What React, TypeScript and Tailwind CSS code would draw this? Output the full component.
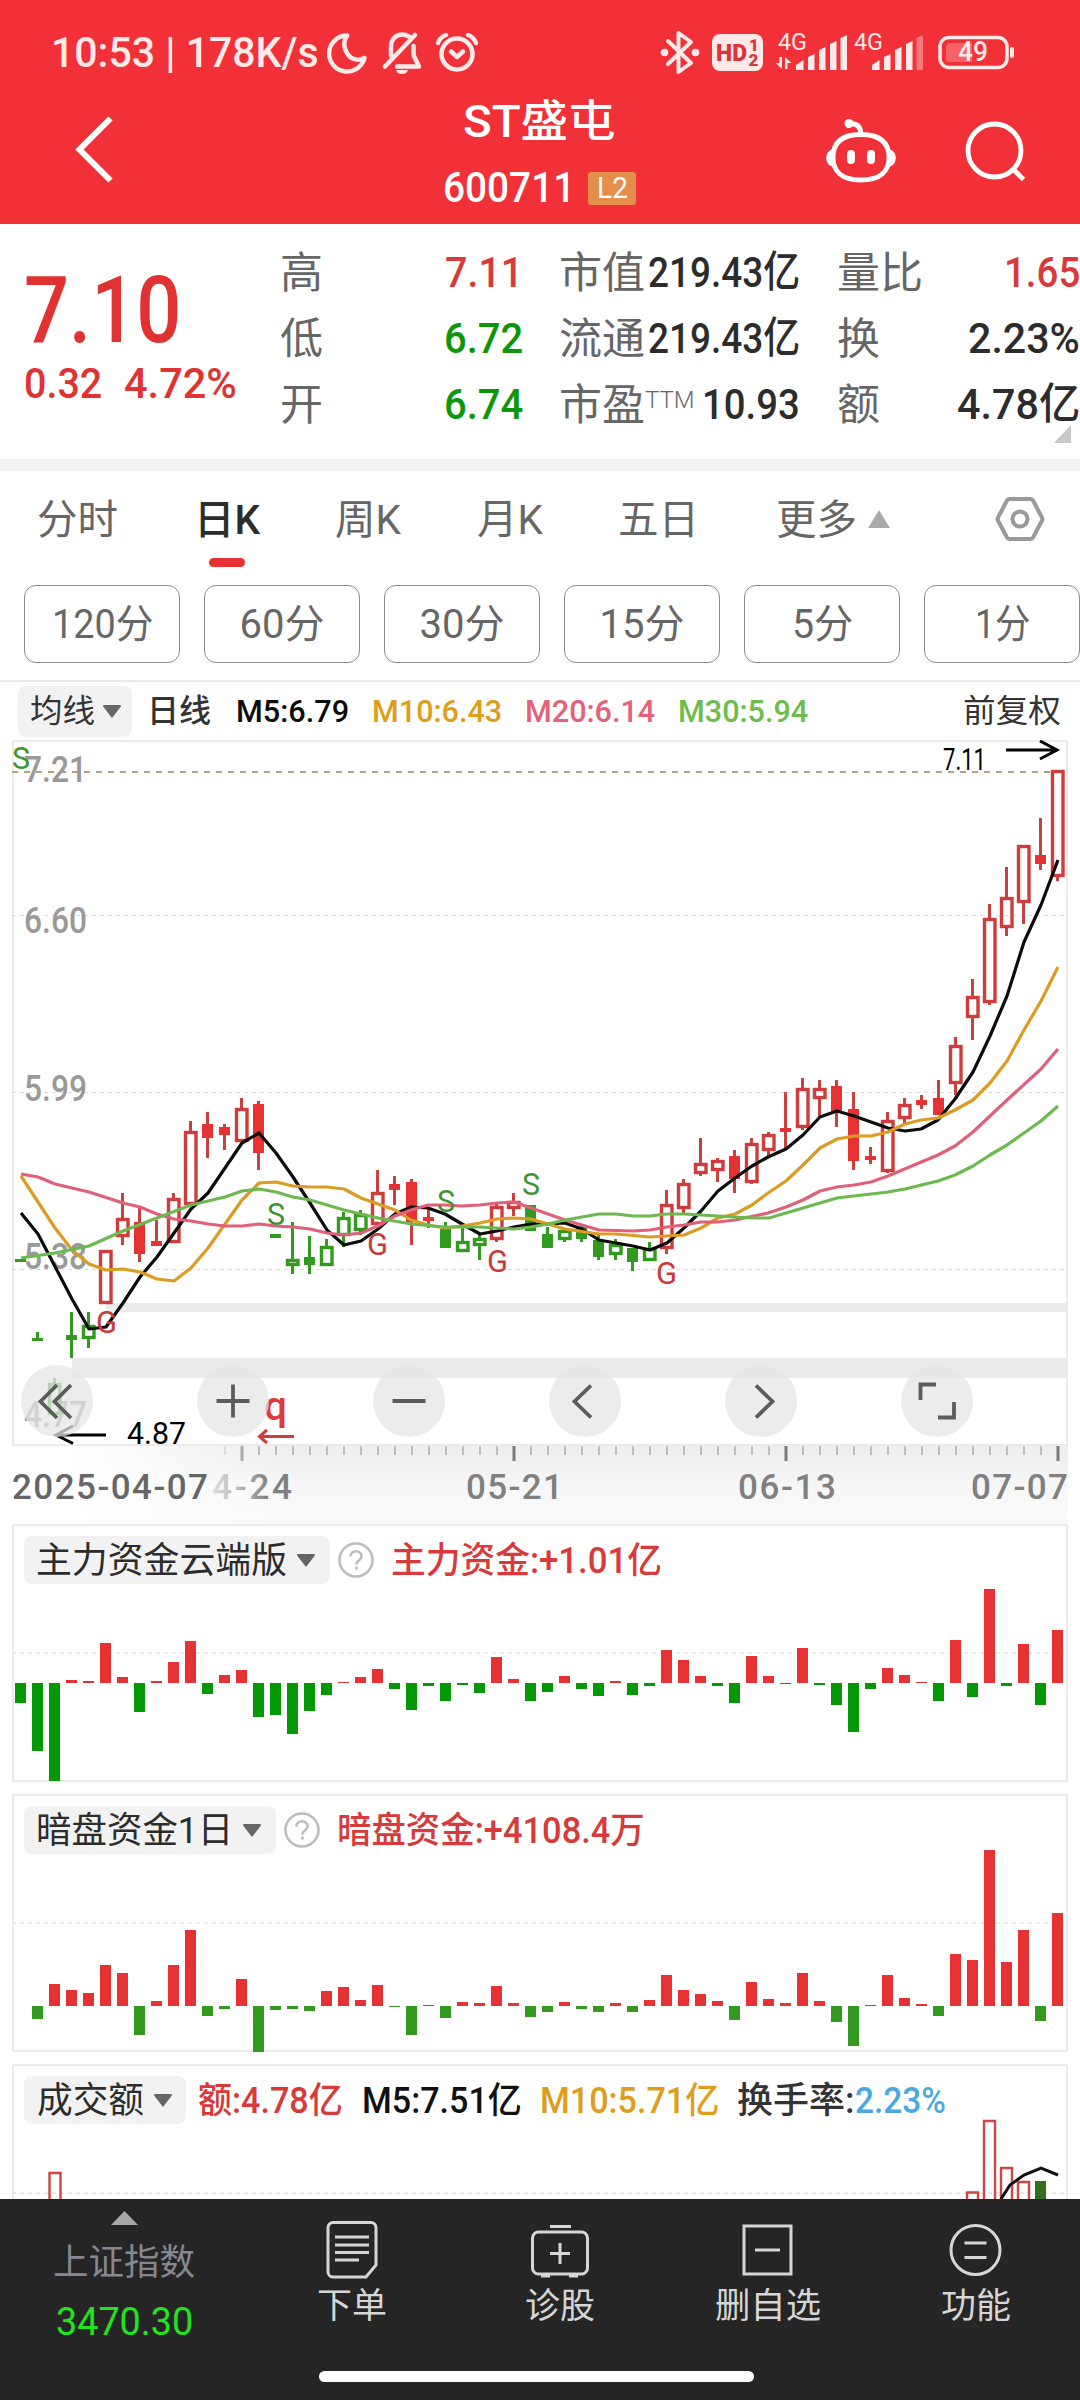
import {useLayoutEffect, useRef, useState} from "react";
import type {ReactNode} from "react";
import clsx from "clsx";

type FitProps = {
    width: number;
    className?: string;
    children: ReactNode;
};

// Condenses a label horizontally so that it takes exactly the given width
function Fit({width, className, children}: FitProps) {
    const ref = useRef<HTMLSpanElement>(null);
    const [scale, setScale] = useState(1);

    useLayoutEffect(() => {
        if (ref.current) {
            setScale(width / ref.current.offsetWidth);
        }
    }, [width, children]);

    return (
        <span className={clsx("inline-block shrink-0 leading-none whitespace-nowrap", className)} style={{width}}>
            <span ref={ref} className="inline-block origin-left" style={{transform: `scaleX(${scale})`}}>{children}</span>
        </span>
    );
}

const STEP = 17;
const FIRST_X = 20.5;
const RED = "#e63232";
const GREEN = "#339a20";

const xAt = (index: number) => FIRST_X + index * STEP;

// [wick top, body top, body bottom, wick bottom, kind], r/g hollow, R/G filled
type Candle = [number, number, number, number, "r" | "g" | "R" | "G"];

const candles: Candle[] = [
    [1259, 1259, 1262, 1262, "G"], [1332, 1338, 1341, 1341, "G"], [1378, 1383, 1415, 1415, "g"],
    [1312, 1335, 1340, 1358, "G"], [1312, 1325, 1339, 1348, "g"], [1250, 1250, 1304, 1304, "r"],
    [1193, 1218, 1237, 1245, "r"], [1208, 1222, 1254, 1262, "R"], [1220, 1241, 1246, 1246, "R"],
    [1193, 1198, 1243, 1243, "r"], [1121, 1131, 1205, 1205, "r"], [1112, 1124, 1138, 1158, "R"],
    [1124, 1127, 1135, 1150, "R"], [1098, 1108, 1142, 1142, "r"], [1101, 1104, 1153, 1170, "R"],
    [1234, 1234, 1238, 1238, "G"], [1222, 1259, 1266, 1274, "g"], [1236, 1257, 1265, 1274, "G"],
    [1239, 1246, 1266, 1266, "g"], [1212, 1217, 1236, 1247, "g"], [1210, 1214, 1231, 1235, "g"],
    [1170, 1192, 1225, 1228, "r"], [1176, 1184, 1190, 1205, "R"], [1179, 1182, 1222, 1245, "R"],
    [1207, 1217, 1221, 1228, "R"], [1222, 1229, 1248, 1248, "G"], [1228, 1241, 1252, 1252, "g"],
    [1235, 1238, 1246, 1260, "g"], [1204, 1206, 1240, 1242, "r"], [1193, 1201, 1209, 1216, "r"],
    [1205, 1205, 1231, 1231, "G"], [1227, 1234, 1248, 1248, "G"], [1228, 1230, 1240, 1242, "g"],
    [1226, 1227, 1239, 1242, "G"], [1235, 1240, 1257, 1260, "G"], [1239, 1244, 1255, 1260, "g"],
    [1248, 1248, 1262, 1271, "G"], [1242, 1248, 1261, 1261, "g"], [1190, 1204, 1249, 1254, "r"],
    [1179, 1183, 1209, 1215, "r"], [1138, 1163, 1174, 1176, "r"], [1158, 1160, 1171, 1182, "r"],
    [1150, 1156, 1179, 1193, "R"], [1138, 1143, 1183, 1184, "r"], [1132, 1134, 1151, 1156, "r"],
    [1092, 1128, 1132, 1150, "R"], [1078, 1088, 1128, 1130, "r"], [1080, 1088, 1099, 1118, "r"],
    [1080, 1086, 1112, 1127, "R"], [1092, 1109, 1161, 1170, "R"], [1147, 1156, 1160, 1164, "R"],
    [1112, 1120, 1172, 1173, "r"], [1098, 1104, 1119, 1123, "r"], [1095, 1100, 1105, 1109, "R"],
    [1080, 1098, 1115, 1115, "R"], [1037, 1045, 1084, 1095, "r"], [979, 996, 1018, 1040, "r"],
    [904, 918, 1003, 1005, "r"], [867, 897, 928, 936, "r"], [845, 845, 903, 924, "r"],
    [818, 855, 864, 870, "R"], [770, 770, 877, 881, "r"],
];

const averages = [
    {
        color: "#0c0c0c",
        points: "21,1213 38,1234 72,1299 89,1329 106,1327 123,1303 140,1277 157,1257 174,1233 191,1209 208,1193 225,1168 242,1143 259,1133 276,1153 293,1177 310,1203 327,1230 344,1245 361,1241 378,1229 395,1214 411,1207 428,1208 445,1214 462,1224 480,1234 497,1231 514,1227 531,1224 548,1224 565,1223 582,1229 599,1240 616,1243 633,1246 650,1250 667,1243 684,1228 701,1211 718,1191 735,1178 752,1166 768,1157 786,1149 803,1135 820,1117 837,1111 854,1116 871,1122 888,1128 905,1131 921,1129 938,1120 955,1099 973,1072 990,1036 1007,996 1024,942 1041,905 1058,860",
    },
    {
        color: "#dc9c22",
        points: "21,1176 38,1202 55,1228 72,1250 89,1264 106,1270 123,1269 140,1272 157,1279 174,1281 191,1268 208,1248 225,1224 242,1200 259,1183 276,1182 293,1186 310,1187 327,1187 344,1189 361,1198 378,1204 395,1210 411,1220 428,1225 445,1228 462,1226 480,1223 497,1219 514,1218 531,1219 548,1224 565,1229 599,1234 616,1234 650,1237 684,1235 701,1228 718,1218 735,1214 752,1205 768,1193 786,1181 803,1165 820,1148 837,1139 854,1136 871,1136 888,1132 905,1124 921,1120 938,1118 955,1110 973,1100 990,1083 1007,1061 1024,1030 1041,1001 1058,967",
    },
    {
        color: "#e0607a",
        points: "21,1174 38,1177 55,1184 89,1192 123,1203 140,1207 157,1214 174,1219 191,1221 208,1224 225,1226 242,1226 259,1224 276,1226 293,1227 310,1229 327,1233 344,1235 361,1233 378,1226 395,1216 411,1210 428,1205 445,1205 462,1206 480,1205 497,1203 514,1202 531,1208 548,1214 565,1220 582,1225 599,1230 633,1231 650,1230 667,1227 684,1225 701,1222 718,1222 735,1220 768,1213 786,1207 803,1200 820,1191 837,1187 854,1185 871,1182 888,1176 938,1155 955,1146 973,1132 990,1116 1007,1100 1041,1069 1058,1049",
    },
    {
        color: "#6cb94f",
        points: "21,1258 55,1253 89,1246 123,1231 157,1218 191,1205 225,1197 242,1191 259,1189 276,1192 293,1197 310,1200 344,1210 378,1218 411,1224 445,1227 480,1227 514,1229 531,1227 548,1224 565,1220 599,1214 616,1214 633,1216 650,1216 667,1214 684,1214 701,1215 735,1217 752,1218 769,1218 786,1213 803,1208 820,1203 837,1198 888,1192 905,1189 938,1181 955,1175 973,1166 990,1155 1007,1145 1041,1121 1058,1106",
    },
];

const signals = [
    {x: 13, y: 769, sign: "S"},
    {x: 97, y: 1333, sign: "G"},
    {x: 268, y: 1225, sign: "S"},
    {x: 368, y: 1255, sign: "G"},
    {x: 438, y: 1212, sign: "S"},
    {x: 488, y: 1272, sign: "G"},
    {x: 523, y: 1195, sign: "S"},
    {x: 657, y: 1284, sign: "G"},
];

const priceLabels = [
    {text: "7.21", y: 782},
    {text: "6.60", y: 933},
    {text: "5.99", y: 1101},
    {text: "5.38", y: 1269},
    {text: "4.77", y: 1427},
];

const mainFlow = [
    -20, -68, -98, 3, 2, 40, 6, -29, 2, 21, 42, -11, 8, 13, -34, -32, -51, -28, -12, 1, 6, 14, -6, -27, -3, -18, -2, -10, 26, 4, -18,
    -9, 7, -6, -13, 2, -12, -3, 33, 23, 7, -3, -20, 27, 7, -1, 35, -2, -22, -49, -6, 15, 8, 1, -18, 43, -14, 94, -3, 39, -22, 53,
];

const darkFlow = [
    0, -13, 22, 16, 13, 41, 33, -29, 5, 41, 76, -10, -3, 27, -46, -4, -3, -5, 15, 19, 6, 21, -1, -29, 1, -12, 4, 3, 20, 3, -11,
    -6, 4, -3, -6, 3, -6, 6, 31, 16, 12, 5, -14, 24, 7, 3, 33, 5, -16, -40, 1, 31, 8, 2, -10, 52, 46, 156, 44, 76, -15, 93,
];

export default function App() {
    return (
        <div className="flex h-[2400px] w-[1080px] flex-col overflow-hidden bg-white font-[Roboto,'Noto_Sans_CJK_SC',sans-serif] text-[#333]">
            <Header/>
            <Quote/>
            <Periods/>
            <KLine/>
            <FlowPanel
                title="主力资金云端版"
                titleWidth={251}
                value="主力资金:+1.01亿"
                valueWidth={271}
                top={1525}
                base={1683}
                grid={1653}
                data={mainFlow}
                green="#049804"
            />
            <div className="h-3 shrink-0"/>
            <FlowPanel
                title="暗盘资金1日"
                titleWidth={197}
                value="暗盘资金:+4108.4万"
                valueWidth={308}
                top={1795}
                base={2006}
                grid={1923}
                data={darkFlow}
                green={GREEN}
            />
            <div className="h-3 shrink-0"/>
            <Turnover/>
            <BottomBar/>
        </div>
    );
}

function Header() {
    return (
        <header className="h-[224px] shrink-0 bg-[#f23037] text-white">
            <div className="flex h-[84px] items-center pt-5 pl-[51px] text-[#ffe9e9]">
                <Fit width={268} className="text-[43px] font-medium">10:53 | 178K/s</Fit>
                <svg className="ml-[8px] h-[48px] w-[160px]" viewBox="327 28 160 48" fill="none" stroke="currentColor" strokeWidth="4.500" strokeLinecap="round" strokeLinejoin="round">
                    <path d="M347 35.5a18 18 0 1 0 17.500 22.500c-5 3-13 2-17-4c-4-6-4-13-.5-18.500z"/>
                    <path d="M385 66.500 415 35M391 56V47c0-8 5-12.500 11-12.500 3 0 5 .8 7 2M413.500 46v9l5.500 11.500H397"/>
                    <path d="M396 70h12c-1 3-3.500 4-6 4s-5-1-6-4z" fill="currentColor" stroke="none"/>
                    <circle cx="457" cy="54" r="15.500"/>
                    <path d="M451 51.500l6 5.500 6-5.500M438 43c1.500-4 4-6.500 8-8M476 43c-1.500-4-4-6.500-8-8"/>
                </svg>
                <svg className="ml-[171px] h-[48px] w-[362px]" viewBox="658 28 362 48">
                    <path d="M668 41l23 22-12.500 9V33L691 42 668 64" fill="none" stroke="currentColor" strokeWidth="4" strokeLinejoin="round" strokeLinecap="round"/>
                    <circle cx="664.500" cy="52.500" r="3.800" fill="currentColor"/>
                    <circle cx="695.500" cy="52.500" r="3.800" fill="currentColor"/>
                    <rect x="712" y="34" width="51" height="37" rx="8" fill="currentColor"/>
                    <g fill="#d8353b" fontWeight="900">
                        <text x="716" y="61" fontSize="23" textLength="31" lengthAdjust="spacingAndGlyphs">HD</text>
                        <text x="749" y="51" fontSize="17">1</text>
                        <text x="748.500" y="66" fontSize="17">2</text>
                    </g>
                    <g fill="currentColor" fontSize="24">
                        <text x="778" y="50" textLength="29" lengthAdjust="spacingAndGlyphs">4G</text>
                        <text x="854" y="50" textLength="29" lengthAdjust="spacingAndGlyphs">4G</text>
                    </g>
                    <path d="M782 57v12l-6.500-6h4V57zM785 69V57l6.500 6h-4v6z" fill="currentColor"/>
                    <path d="M796 70v-5l7.500-5v10zM808 70V57l6.500-3v16zM819 70V50l6.500-3v23zM830 70V44l6.500-3v29zM840.500 70V38l6.500-3v35z" fill="currentColor"/>
                    <path d="M872 70v-5l7.500-5v10zM884 70V57l6.500-3v16zM895 70V50l6.500-3v23zM906 70V44l6.500-3v29z" fill="currentColor"/>
                    <path d="M916.500 70V38l6.500-3v35z" fill="currentColor" opacity=".4"/>
                    <rect x="940" y="37.500" width="67" height="30" rx="9" fill="none" stroke="currentColor" strokeWidth="3.500"/>
                    <path d="M950 43h22v19h-22a4 4 0 0 1-4-4V47a4 4 0 0 1 4-4z" fill="currentColor" opacity=".28"/>
                    <rect x="1010" y="47" width="4" height="11" rx="2" fill="currentColor"/>
                    <text x="958" y="61" fontSize="27" fontWeight="500" fill="currentColor" textLength="30" lengthAdjust="spacingAndGlyphs">49</text>
                </svg>
            </div>
            <div className="flex h-[140px]">
                <svg className="mt-7 ml-[70px] h-[76px] w-[50px]" viewBox="70 112 50 76" fill="none" stroke="currentColor" strokeWidth="6">
                    <path d="M110.500 118.500 79.500 149.500l31 31"/>
                </svg>
                <div className="ml-[306px] flex w-[228px] flex-col items-center">
                    <Fit width={152} className="mt-[16px] ml-[-3px] text-[44px] font-medium">ST盛屯</Fit>
                    <div className="mt-[23px] ml-[-1px] flex items-center gap-[13px]">
                        <Fit width={132} className="text-[42px] font-medium">600711</Fit>
                        <span className="flex h-[33px] w-[48px] items-center justify-center rounded-[3px] bg-[#e58f4b]">
                            <Fit width={31} className="text-[29px]">L2</Fit>
                        </span>
                    </div>
                </div>
                <svg className="mt-7 ml-[168px] h-[76px] w-[250px]" viewBox="822 112 250 76" fill="none" stroke="currentColor" strokeWidth="4.800">
                    <path d="M861 134.500c-22 0-28 11-28 23 0 13 8 22.500 28 22.500s28-9.500 28-22.500c0-12-6-23-28-23z"/>
                    <path d="M860.500 134c.5-7-3-10-9-10.500"/>
                    <circle cx="849" cy="123.500" r="4.500" fill="currentColor" stroke="none"/>
                    <path d="M832 150c-7 1-7 15 0 16zM890 150c7 1 7 15 0 16z" fill="currentColor" strokeWidth="1"/>
                    <path d="M851 154v6M871 154v6" strokeWidth="8" strokeLinecap="round"/>
                    <circle cx="994.500" cy="150.500" r="26.500"/>
                    <path d="M1013.500 169.500l10 10"/>
                </svg>
            </div>
        </header>
    );
}

function Quote() {
    return (
        <section className="relative flex h-[247px] shrink-0 border-b-[12px] border-[#f4f4f4] pt-[15px] text-[43px] text-[#666]">
            <div className="w-[281px] pl-[24px] text-[#e13232]">
                <Fit width={157} className="mt-[26px] text-[92px] font-medium">7.10</Fit>
                <div className="mt-[2px] flex gap-[22px] font-medium">
                    <Fit width={78}>0.32</Fit>
                    <Fit width={113}>4.72%</Fit>
                </div>
            </div>
            <div className="ml-[-1px] w-[243px]">
                <QuoteRow label="高"><Fit width={78} className="font-medium text-[#d83a3a]">7.11</Fit></QuoteRow>
                <QuoteRow label="低"><Fit width={79} className="font-medium text-[#0c960c]">6.72</Fit></QuoteRow>
                <QuoteRow label="开"><Fit width={79} className="font-medium text-[#0c960c]">6.74</Fit></QuoteRow>
            </div>
            <div className="ml-[36px] w-[241px]">
                <QuoteRow label="市值"><Fit width={152} className="font-medium text-[#2c2c2c]">219.43亿</Fit></QuoteRow>
                <QuoteRow label="流通"><Fit width={152} className="font-medium text-[#2c2c2c]">219.43亿</Fit></QuoteRow>
                <QuoteRow label={<>市盈<span className="relative -top-3 text-[24px] font-light">TTM</span></>}>
                    <Fit width={98} className="font-medium text-[#2c2c2c]">10.93</Fit>
                </QuoteRow>
            </div>
            <div className="ml-[37px] w-[243px]">
                <QuoteRow label="量比"><Fit width={76} className="font-medium text-[#d83a3a]">1.65</Fit></QuoteRow>
                <QuoteRow label="换"><Fit width={112} className="font-medium text-[#2c2c2c]">2.23%</Fit></QuoteRow>
                <QuoteRow label="额"><Fit width={123} className="font-medium text-[#2c2c2c]">4.78亿</Fit></QuoteRow>
            </div>
            <svg className="absolute right-[9px] bottom-[16px] h-[18px] w-[17px]" viewBox="0 0 17 18">
                <path d="M17 0v18H0z" fill="#c8c8c8"/>
            </svg>
        </section>
    );
}

function QuoteRow({label, children}: {label: ReactNode; children: ReactNode}) {
    return (
        <div className="flex h-[66px] items-center justify-between leading-none whitespace-nowrap">
            <span className="pt-[3px] text-[43px]">{label}</span>
            {children}
        </div>
    );
}

function Periods() {
    const minutes = ["120分", "60分", "30分", "15分", "5分", "1分"];

    return (
        <section className="h-[211px] shrink-0 border-b-2 border-[#e9e9e9] text-[40.5px] text-[#666]">
            <div className="relative flex h-[96px] items-center pl-[37px] leading-none">
                <span className="w-[157px] pt-[3px]">分时</span>
                <span className="w-[141px] pt-[3px] font-medium text-[#2c2c2c]">日K</span>
                <span className="w-[142px] pt-[3px]">周K</span>
                <span className="w-[141px] pt-[3px]">月K</span>
                <span className="w-[158px] pt-[3px]">五日</span>
                <span className="w-[81px] pt-[3px] whitespace-nowrap">更多</span>
                <svg className="ml-[11px] h-[18px] w-[22px]" viewBox="0 0 22 18">
                    <path d="M11 0l11 18H0z" fill="#aaa"/>
                </svg>
                <svg className="ml-[105px] h-[48px] w-[50px]" viewBox="0 0 50 48" fill="none" stroke="#999" strokeWidth="4">
                    <path d="M14.500 4h21a3 3 0 0 1 2.500 1.500l9 17a3 3 0 0 1 0 3l-9 17a3 3 0 0 1-2.500 1.500h-21a3 3 0 0 1-2.500-1.500l-9-17a3 3 0 0 1 0-3l9-17A3 3 0 0 1 14.500 4z" strokeLinejoin="round"/>
                    <circle cx="25" cy="24" r="7.500"/>
                </svg>
                <span className="absolute top-[87px] left-[209px] h-[9px] w-9 rounded-full bg-[#e63232]"/>
            </div>
            <div className="mt-[18px] ml-6 flex gap-6">
                {minutes.map((label) => (
                    <span key={label} className="flex h-[78px] w-[156px] shrink-0 items-center justify-center rounded-xl border border-[#8a8a8a] text-[40px] leading-none">
                        <Fit width={label.length === 4 ? 101 : label.length === 3 ? 85 : label === "5分" ? 61 : 55} className="pt-px">{label}</Fit>
                    </span>
                ))}
            </div>
        </section>
    );
}

function KLine() {
    return (
        <section className="relative h-[842px] shrink-0">
            <div className="flex h-[58px] items-center pl-[18px] text-[32px]">
                <span className="flex h-[51px] w-[114px] items-center justify-center gap-2 rounded-lg bg-[#f2f2f2]">
                    <Fit width={65}>均线</Fit>
                    <Caret/>
                </span>
                <Fit width={64} className="ml-[15px] font-medium">日线</Fit>
                <Fit width={113} className="ml-[25px] font-medium text-[#0c0c0c]">M5:6.79</Fit>
                <Fit width={130} className="ml-[23px] font-medium text-[#e09d1c]">M10:6.43</Fit>
                <Fit width={130} className="ml-[23px] font-medium text-[#e5607a]">M20:6.14</Fit>
                <Fit width={130} className="ml-[23px] font-medium text-[#6cbd4c]">M30:5.94</Fit>
                <Fit width={98} className="mr-[19px] ml-auto">前复权</Fit>
            </div>
            <svg className="block h-[784px] w-[1080px]" viewBox="0 740 1080 784">
                <defs>
                    <linearGradient id="axisDown" x1="0" y1="0" x2="0" y2="1">
                        <stop offset="0" stopColor="#eeeeee"/>
                        <stop offset=".6" stopColor="#f8f8f8"/>
                        <stop offset="1" stopColor="#fafafa"/>
                    </linearGradient>
                    <linearGradient id="axisLeft" x1="0" y1="0" x2="1" y2="0">
                        <stop offset=".2" stopColor="#fff"/>
                        <stop offset="1" stopColor="#fff" stopOpacity="0"/>
                    </linearGradient>
                    <linearGradient id="dateFade" gradientUnits="userSpaceOnUse" x1="205" y1="0" x2="270" y2="0">
                        <stop offset="0" stopColor="#808080" stopOpacity=".15"/>
                        <stop offset=".4" stopColor="#808080" stopOpacity=".45"/>
                        <stop offset="1" stopColor="#808080"/>
                    </linearGradient>
                </defs>
                <rect x="12" y="1446" width="1056" height="78" fill="url(#axisDown)"/>
                <rect x="12" y="1446" width="280" height="78" fill="url(#axisLeft)"/>
                <rect x="13" y="741" width="1054" height="704" fill="none" stroke="#ebebeb" strokeWidth="2"/>
                <rect x="106" y="1303" width="962" height="9" fill="#eaeaea"/>
                <rect x="72" y="1358" width="996" height="20" fill="#eaeaea"/>
                <path d="M12 915.500H1066M12 1092.500H1066M12 1269.500H1066" stroke="#dedede" strokeWidth="1.200" strokeDasharray="4 4"/>
                <path d="M12 772H1052" stroke="#b3a27f" strokeWidth="2" strokeDasharray="6 6"/>

                <g fill="#999" fontSize="37" fontWeight="500">
                    {priceLabels.map(({text, y}) => (
                        <text key={text} x="24" y={y} textLength="63" lengthAdjust="spacingAndGlyphs">{text}</text>
                    ))}
                </g>

                {candles.map(([high, top, bottom, low, kind], index) => {
                    const x = xAt(index);
                    const red = kind === "r" || kind === "R";
                    const hollow = kind === "r" || kind === "g";
                    const color = red ? (hollow ? "#cf3c3c" : RED) : GREEN;

                    return (
                        <g key={index}>
                            {high < top && <rect x={x - 1.5} y={high} width="3" height={top - high} fill={red ? "#c94040" : color}/>}
                            {low > bottom && <rect x={x - 1.5} y={bottom} width="3" height={low - bottom} fill={red ? "#c94040" : color}/>}
                            {hollow ? (
                                <rect x={x - 5} y={top + 1.5} width="10.500" height={bottom - top - 3} fill="none" stroke={color} strokeWidth="3.400"/>
                            ) : (
                                <rect x={x - 5.5} y={top} width="11" height={bottom - top} fill={color}/>
                            )}
                        </g>
                    );
                })}

                {averages.map(({color, points}) => (
                    <polyline key={color} points={points} fill="none" stroke={color} strokeWidth="3.200" strokeLinejoin="round"/>
                ))}

                <g fontSize="31" fontFamily="Roboto">
                    {signals.map(({x, y, sign}) => (
                        <text
                            key={x}
                            x={x - 1}
                            y={y}
                            fill={sign === "S" ? "#3d9430" : "#cb3a3a"}
                            textLength={sign === "S" ? 18 : 21}
                            lengthAdjust="spacingAndGlyphs"
                        >
                            {sign}
                        </text>
                    ))}
                </g>

                <g fill="#000" fontSize="31">
                    <text x="943" y="770" textLength="43" lengthAdjust="spacingAndGlyphs">7.11</text>
                    <text x="127" y="1444" textLength="59" lengthAdjust="spacingAndGlyphs">4.87</text>
                </g>
                <path d="M1006 750h50M1040 741l17 9-17 9M106 1435H56M73 1426l-17 9 17 8.500" fill="none" stroke="#000" strokeWidth="3"/>
                <text x="264" y="1420" fontSize="41" fontWeight="500" fill="#dd3a3a" textLength="23" lengthAdjust="spacingAndGlyphs">q</text>
                <path d="M294 1436.500h-34M267 1430l-7.500 6.500 7.500 6.500" fill="none" stroke="#cf3c3c" strokeWidth="3"/>

                <path d={Array.from({length: 49}, (_, i) => `M${242 + i * STEP} 1446v9`).join("")} stroke="#bdbdbd" strokeWidth="2"/>
                <path d="M225 1446v9" stroke="#ddd" strokeWidth="2"/>
                <path d="M242 1446v15" stroke="#aaa" strokeWidth="3"/>
                <path d="M514 1446v15M786 1446v15M1058 1446v15" stroke="#7a7a7a" strokeWidth="3"/>
                <g fontSize="35" fontWeight="500" fill="#808080">
                    <text x="12" y="1499" fill="#666" textLength="196" lengthAdjust="spacing">2025-04-07</text>
                    <text x="212" y="1499" fill="url(#dateFade)" textLength="80" lengthAdjust="spacing">4-24</text>
                    <text x="466" y="1499" textLength="97" lengthAdjust="spacing">05-21</text>
                    <text x="738" y="1499" textLength="98" lengthAdjust="spacing">06-13</text>
                    <text x="971" y="1499" textLength="97" lengthAdjust="spacing">07-07</text>
                </g>
            </svg>
            <div className="absolute top-[683px] left-[21px] flex gap-[104px]">
                <RoundButton path="M36 20 19.500 36.500 36 53M50 20 33.500 36.500 50 53"/>
                <RoundButton path="M36 19.500v33M19.500 36h33"/>
                <RoundButton path="M19.500 36h33"/>
                <RoundButton path="M42 20.500 25.500 36.500 42 52.500"/>
                <RoundButton path="M31 20.500 47.500 36.500 31 52.500"/>
                <RoundButton path="M19.500 35V19.500H35M37 52.500h16V37"/>
            </div>
        </section>
    );
}

function RoundButton({path}: {path: string}) {
    return (
        <span className="size-[72px] rounded-full bg-[#e6e6e6]/75">
            <svg className="size-full" viewBox="0 0 72 72" fill="none" stroke="#5c5c5c" strokeWidth="3.800">
                <path d={path}/>
            </svg>
        </span>
    );
}

function Caret() {
    return (
        <svg className="h-[13px] w-[18px] shrink-0" viewBox="0 0 18 13">
            <path d="M1 0h16a1 1 0 0 1 .7 1.700L9 13 .3 1.700A1 1 0 0 1 1 0z" fill="#666"/>
        </svg>
    );
}

type FlowPanelProps = {
    title: string;
    titleWidth: number;
    value: string;
    valueWidth: number;
    top: number;
    base: number;
    grid: number;
    data: number[];
    green: string;
};

function FlowPanel({title, titleWidth, value, valueWidth, top, base, grid, data, green}: FlowPanelProps) {
    return (
        <section className="relative mx-3 h-[258px] shrink-0 border-2 border-[#ebebeb]">
            <svg className="absolute -inset-0.5 h-[258px] w-[1056px]" viewBox={`12 ${top - 1} 1056 258`}>
                <path d={`M12 ${grid}H1066`} stroke="#ebebeb" strokeWidth="2" strokeDasharray="4 4"/>
                {data.map((size, index) => (
                    <rect
                        key={index}
                        x={xAt(index) - 5.5}
                        y={size > 0 ? base - size : base}
                        width="11"
                        height={Math.abs(size)}
                        fill={size > 0 ? RED : green}
                    />
                ))}
            </svg>
            <div className="relative mt-[10px] ml-[10px] flex h-12 items-center text-[36px]">
                <span className="flex h-12 items-center gap-[10px] rounded-lg bg-[#f2f2f2] pr-[15px] pl-[12px]">
                    <Fit width={titleWidth} className="pt-px text-[#2c2c2c]">{title}</Fit>
                    <Caret/>
                </span>
                <HelpMark/>
                <Fit width={valueWidth} className="ml-[17px] pt-px font-medium text-[#d83a3a]">{value}</Fit>
            </div>
        </section>
    );
}

function HelpMark() {
    return (
        <svg className="ml-2 size-9 shrink-0" viewBox="0 0 36 36" fill="none" stroke="#bdbdbd" strokeWidth="2.600">
            <circle cx="18" cy="18" r="16.500"/>
            <path d="M12.500 14.500c0-7 11-7 11 0 0 4-5 3.500-5 8M18.500 24.500v3"/>
        </svg>
    );
}

function Turnover() {
    return (
        <section className="relative mx-3 h-[135px] shrink-0 border-2 border-b-0 border-[#ebebeb]">
            <svg className="absolute -inset-0.5 h-[135px] w-[1056px]" viewBox="12 2064 1056 135">
                <path d="M12 2193H1066" stroke="#e4e4e4" strokeWidth="1.500" strokeDasharray="4 4"/>
                <path d="M49.500 2199v-26h11v26M967 2199v-6.500h11v6.500M984 2199v-78h11v78M1001 2199v-31h11v31M1018 2199v-17h11v17" fill="none" stroke="#cf4444" strokeWidth="2.400"/>
                <rect x="1035" y="2181" width="11" height="18" fill="#2f7018"/>
                <path d="M1001 2199l9-14 14-10 17-7 17 7" fill="none" stroke="#111" strokeWidth="3"/>
            </svg>
            <div className="relative mt-[10px] ml-[10px] flex h-12 items-center text-[36px] font-medium">
                <span className="flex h-12 w-[162px] items-center gap-[10px] rounded-lg bg-[#f2f2f2] pl-[13px] font-normal">
                    <Fit width={107} className="pt-px text-[#2c2c2c]">成交额</Fit>
                    <Caret/>
                </span>
                <Fit width={145} className="ml-[12px] pt-px text-[#d83a3a]">额:4.78亿</Fit>
                <Fit width={160} className="ml-[19px] pt-px text-[#111]">M5:7.51亿</Fit>
                <Fit width={179} className="ml-[18px] pt-px text-[#e09d1c]">M10:5.71亿</Fit>
                <Fit width={118} className="ml-[18px] pt-px">换手率:</Fit>
                <Fit width={91} className="pt-px text-[#4aa9e0]">2.23%</Fit>
            </div>
        </section>
    );
}

const actions = [
    {
        label: "下单",
        width: 70,
        icon: (
            <>
                <path d="M11 2.500h38a5 5 0 0 1 5 5V45L44 57H11a5 5 0 0 1-5-5V7.500a5 5 0 0 1 5-5z"/>
                <path d="M13 17h34M13 25h34M13 32.500h34M13 40h24"/>
            </>
        ),
    },
    {
        label: "诊股",
        width: 70,
        icon: (
            <>
                <rect x="2.500" y="12" width="55" height="42" rx="6"/>
                <path d="M20 6.500h21M30 23v21M20 33.500h20M11 56h9M39 56h9"/>
            </>
        ),
    },
    {
        label: "删自选",
        width: 106,
        icon: (
            <>
                <rect x="6" y="6" width="47" height="48"/>
                <path d="M17 30h25"/>
            </>
        ),
    },
    {
        label: "功能",
        width: 70,
        icon: (
            <>
                <circle cx="29.500" cy="30" r="24.500"/>
                <path d="M18.500 23h22M18.500 37.500h22"/>
            </>
        ),
    },
];

function BottomBar() {
    return (
        <footer className="relative flex h-[201px] shrink-0 bg-[#252525] text-[#d6d6d6]">
            <div className="flex w-[248px] flex-col items-center pt-3">
                <svg className="h-[14px] w-[27px]" viewBox="0 0 27 14">
                    <path d="M13.500 0 27 14H0z" fill="#a8a8a8"/>
                </svg>
                <Fit width={142} className="mt-[20px] text-[36px] text-[#878790]">上证指数</Fit>
                <Fit width={137} className="mt-[22px] text-[38px] text-[#1fe61f]">3470.30</Fit>
            </div>
            {actions.map(({label, width, icon}) => (
                <div key={label} className="flex w-[208px] flex-col items-center pt-[21px]">
                    <svg className="size-[60px]" viewBox="0 0 60 60" fill="none" stroke="currentColor" strokeWidth="3">{icon}</svg>
                    <Fit width={width} className="mt-[9px] text-[35px]">{label}</Fit>
                </div>
            ))}
            <span className="absolute bottom-[18px] left-[319px] h-[11px] w-[435px] rounded-full bg-white"/>
        </footer>
    );
}
